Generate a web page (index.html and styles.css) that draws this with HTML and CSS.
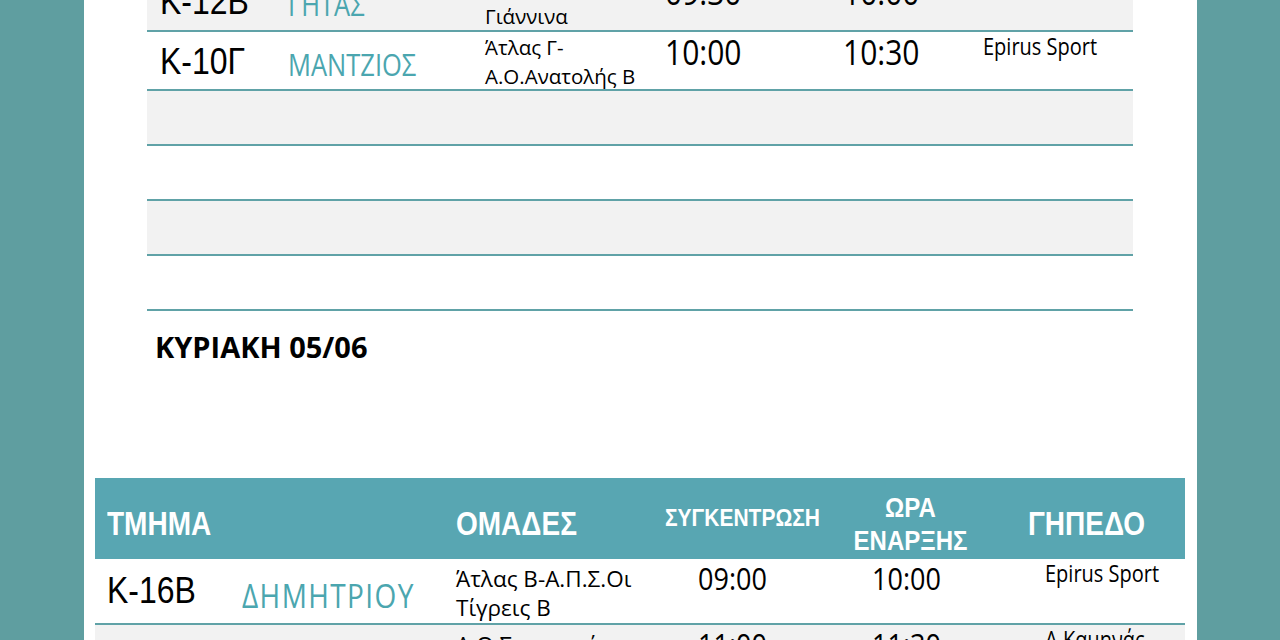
FILE: index.html
```html
<!DOCTYPE html>
<html lang="el">
<head>
<meta charset="utf-8">
<title>Πρόγραμμα αγώνων</title>
<link rel="stylesheet" href="styles.css">
</head>
<body>
<div class="page">
  <div class="sched top">
    <div class="row gray r1">
      <div class="c code"><div class="t">K-12B</div></div>
      <div class="c coach"><div class="t">ΓΗΤΑΣ</div></div>
      <div class="c teams"><div class="m">Άτλας Β-ΠΑΣ<br>Γιάννινα</div></div>
      <div class="c time"><div class="t">09:30</div></div>
      <div class="c time"><div class="t">10:00</div></div>
      <div class="c venue"></div>
    </div>
    <div class="row r2">
      <div class="c code"><div class="t">K-10Γ</div></div>
      <div class="c coach"><div class="t">ΜΑΝΤΖΙΟΣ</div></div>
      <div class="c teams"><div class="m">Άτλας Γ-<br>Α.Ο.Ανατολής Β</div></div>
      <div class="c time"><div class="t">10:00</div></div>
      <div class="c time"><div class="t">10:30</div></div>
      <div class="c venue"><div class="t">Epirus Sport</div></div>
    </div>
    <div class="row gray"></div>
    <div class="row"></div>
    <div class="row gray"></div>
    <div class="row"></div>
  </div>

  <h2 class="day">ΚΥΡΙΑΚΗ 05/06</h2>

  <div class="sched bot">
    <div class="head">
      <div class="h h-big"><div class="t">ΤΜΗΜΑ</div></div>
      <div class="h"></div>
      <div class="h h-big"><div class="t">ΟΜΑΔΕΣ</div></div>
      <div class="h h-small"><div class="t">ΣΥΓΚΕΝΤΡΩΣΗ</div></div>
      <div class="h h-two"><div class="t">ΩΡΑ<br>ΕΝΑΡΞΗΣ</div></div>
      <div class="h h-big h-venue"><div class="t">ΓΗΠΕΔΟ</div></div>
    </div>
    <div class="row">
      <div class="c code"><div class="t">K-16B</div></div>
      <div class="c coach"><div class="t">ΔΗΜΗΤΡΙΟΥ</div></div>
      <div class="c teams"><div class="m">Άτλας Β-Α.Π.Σ.Οι<br>Τίγρεις Β</div></div>
      <div class="c time"><div class="t">09:00</div></div>
      <div class="c time2"><div class="t">10:00</div></div>
      <div class="c venue"><div class="t">Epirus Sport</div></div>
    </div>
    <div class="row gray">
      <div class="c code"><div class="t">K-14A</div></div>
      <div class="c coach"><div class="t">ΠΑΠΑΣ</div></div>
      <div class="c teams"><div class="m">Α.Ο.Σταυρακίου<br>-Άτλας Α</div></div>
      <div class="c time"><div class="t">11:00</div></div>
      <div class="c time2"><div class="t">11:30</div></div>
      <div class="c venue"><div class="t">Α.Καμηνάς</div></div>
    </div>
  </div>
</div>
</body>
</html>
```

FILE: styles.css
```css
html, body {
  margin: 0;
  padding: 0;
}

body {
  background: #5f9ea0;
  height: 640px;
  overflow: hidden;
  color: #000000;
  font-family: "Open Sans", "Noto Sans", sans-serif;
}

.page {
  display: flow-root;
  margin-left: 84px;
  width: 1113px;
  height: 700px;
  background: #ffffff;
}

.t {
  transform: scaleY(1.18);
  transform-origin: 0 0;
  white-space: nowrap;
}

.m {
  white-space: nowrap;
}

/* ---------- schedule tables ---------- */
.row {
  display: grid;
  box-sizing: border-box;
  border-bottom: 2px solid #60a2a7;
  background: #ffffff;
}

.row.gray {
  background: #f2f2f2;
}

.top {
  margin: -28px 0 0 63px;
  width: 986px;
}

.top .row {
  grid-template-columns: 128px 197px 180px 178px 140px 163px;
  height: 55px;
}

.top .row.r1 {
  height: 60px;
}

.top .row.r2 {
  height: 59px;
}

.c {
  padding-left: 13px;
}

.code {
  padding-top: 10px;
  font-family: "Liberation Sans", Arial, sans-serif;
  font-size: 32px;
  line-height: 32px;
}

.coach {
  padding-top: 17px;
  font-size: 25.5px;
  line-height: 26px;
  color: #4ba6af;
}

.teams {
  padding-top: 1px;
  font-size: 20.5px;
  line-height: 29px;
}

.time {
  padding-top: 2px;
  font-size: 30px;
  line-height: 30px;
}

.venue {
  padding-top: 3px;
  font-size: 20px;
  line-height: 20px;
}

/* ---------- day heading ---------- */
.day {
  margin: 21px 0 0 71px;
  font-family: "Open Sans", sans-serif;
  font-weight: 700;
  font-size: 29px;
  line-height: 29px;
  color: #000;
}

/* ---------- second table ---------- */
.bot {
  margin: 117px 0 0 11px;
  width: 1090px;
}

.bot .head,
.bot .row {
  display: grid;
  grid-template-columns: 135px 214px 209px 190px 165px 177px;
}

.bot .head {
  height: 81px;
  background: #58a6b2;
  color: #ffffff;
  font-family: "Liberation Sans", Arial, sans-serif;
  font-weight: 700;
}

.h {
  padding-left: 12px;
}

.h-big {
  padding-top: 30px;
  font-size: 28px;
  line-height: 28px;
}

.h-small {
  padding-top: 27px;
  font-size: 21px;
  line-height: 21px;
}

.h-two {
  padding: 13px 30px 0 0;
  font-size: 24px;
  line-height: 28px;
  text-align: center;
}

.h-venue {
  padding-left: 20px;
}

.bot .row {
  height: 66px;
}

.bot .c {
  padding-left: 12px;
}

.bot .code {
  padding-top: 12px;
}

.bot .coach {
  padding-top: 19px;
  font-size: 28px;
  line-height: 28px;
  letter-spacing: 1.4px;
}

.bot .teams {
  padding-top: 5px;
  font-size: 22.5px;
  line-height: 29px;
}

.bot .time,
.bot .time2 {
  padding-top: 3px;
  font-size: 27px;
  line-height: 27px;
}

.bot .time {
  padding-left: 45px;
}

.bot .time2 {
  padding-left: 29px;
}

.bot .venue {
  padding-left: 37px;
}
```
